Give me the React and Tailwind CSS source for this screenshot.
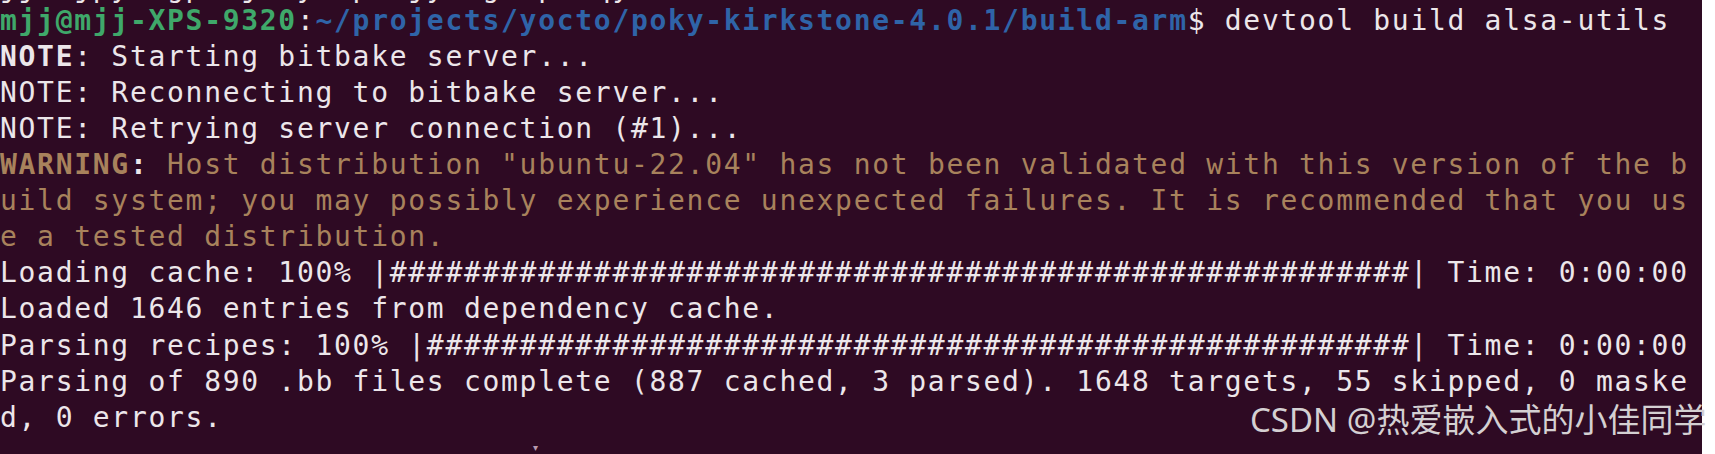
import React from "react";

const W = "text-[#ece6ea]";
const G = "text-[#3fa86a] font-bold";
const B = "text-[#2f64a8] font-bold";
const Y = "text-[#a8825c]";

function Line({ parts, first }) {
  return (
    <div
      className={
        first
          ? "h-[36.1px] leading-[42px] whitespace-pre overflow-visible"
          : "h-[36.1px] leading-[36.1px] whitespace-pre"
      }
    >
      {parts.map((p, i) => (
        <span key={i} className={p[1]}>
          {p[0]}
        </span>
      ))}
    </div>
  );
}

export default function App() {
  const hashes1 = "#".repeat(55);
  const hashes2 = "#".repeat(53);
  const lines = [
    [["jj  jpy  gp  j  y  p  jy  g  p  qy", W]],
    [
      ["mjj@mjj-XPS-9320", G],
      [":", W],
      ["~/projects/yocto/poky-kirkstone-4.0.1/build-arm", B],
      ["$ devtool build alsa-utils", W],
    ],
    [
      ["NOTE", W + " font-bold"],
      [": Starting bitbake server...", W],
    ],
    [["NOTE: Reconnecting to bitbake server...", W]],
    [["NOTE: Retrying server connection (#1)...", W]],
    [
      ["WARNING", Y + " font-bold"],
      [":", W + " font-bold"],
      [' Host distribution "ubuntu-22.04" has not been validated with this version of the b', Y],
    ],
    [["uild system; you may possibly experience unexpected failures. It is recommended that you us", Y]],
    [["e a tested distribution.", Y]],
    [["Loading cache: 100% |" + hashes1 + "| Time: 0:00:00", W]],
    [["Loaded 1646 entries from dependency cache.", W]],
    [["Parsing recipes: 100% |" + hashes2 + "| Time: 0:00:00", W]],
    [["Parsing of 890 .bb files complete (887 cached, 3 parsed). 1648 targets, 55 skipped, 0 maske", W]],
    [["d, 0 errors.", W]],
  ];

  return (
    <div className="relative flex w-[1715px] h-[454px] overflow-hidden bg-white">
      <div
        className="w-[1702px] h-[454px] overflow-hidden bg-[#2e0a23] text-[28px] tracking-[1.7px]"
        style={{ fontFamily: '"DejaVu Sans Mono", monospace' }}
      >
        <div className="mt-[-33.4px]">
          {lines.map((l, i) => (
            <Line key={i} parts={l} first={i === 0} />
          ))}
        </div>
      </div>
      <div className="w-[13px] h-[454px] bg-white" />
      <div
        className="absolute left-[1250px] top-[399px] text-[33px] leading-[42px] whitespace-nowrap text-[#d4d0d2]"
        style={{ fontFamily: '"Noto Sans", "Noto Sans CJK SC", sans-serif' }}
      >
        CSDN @热爱嵌入式的小佳同学
      </div>
      <div className="absolute left-[533px] top-[442px] text-[10px] leading-[10px] text-[#b89ab0]">▾</div>
    </div>
  );
}
